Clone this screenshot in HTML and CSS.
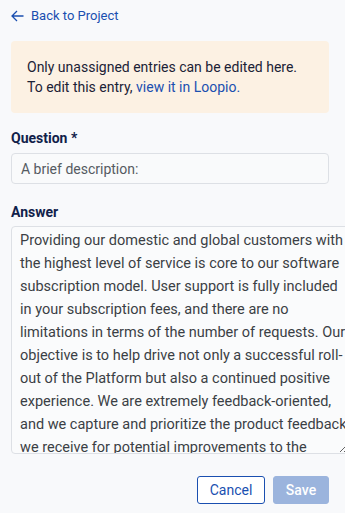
FILE: index.html
```html
<!DOCTYPE html>
<html>
<head>
<meta charset="utf-8">
<link rel="stylesheet" href="styles.css">
</head>
<body>
<div class="page">
  <a class="back" href="#">
    <svg class="arrow" width="13" height="12" viewBox="0 0 13 12"><path d="M6 1 L1 6 L6 11 M1 6 H12.5" fill="none" stroke="#1a4fb0" stroke-width="1.3"/></svg>
    <span>Back to Project</span>
  </a>
  <div class="notice">
    Only unassigned entries can be edited here.<br>
    To edit this entry, <a href="#" class="link">view it in Loopio.</a>
  </div>
  <div class="field first">
    <label class="label">Question *</label>
    <div class="input">A brief description:</div>
  </div>
  <div class="field second">
    <label class="label">Answer</label>
    <textarea class="textarea">Providing our domestic and global customers with the highest level of service is core to our software subscription model. User support is fully included in your subscription fees, and there are no limitations in terms of the number of requests. Our objective is to help drive not only a successful roll-out of the Platform but also a continued positive experience. We are extremely feedback-oriented, and we capture and prioritize the product feedback we receive for potential improvements to the Platform.</textarea>
  </div>
  <div class="actions">
    <button class="btn cancel">Cancel</button>
    <button class="btn save">Save</button>
  </div>
</div>
</body>
</html>
```
FILE: styles.css
```css
html, body {
  margin: 0;
  padding: 0;
  background: #f8f9fb;
  overflow: hidden;
}
.page {
  font-family: Roboto, "Liberation Sans", sans-serif;
  padding: 7px 16px 0 11px;
  width: 318px;
}
.back {
  display: flex;
  align-items: center;
  gap: 7px;
  color: #1a4fb0;
  text-decoration: none;
  font-size: 13px;
  height: 17px;
}
.notice {
  margin-top: 17px;
  background: #fcf1e3;
  border-radius: 4px;
  padding: 16px 15px 16px 16px;
  font-size: 14px;
  line-height: 20px;
  color: #1b2236;
}
.link {
  color: #1a4fb0;
  text-decoration: none;
}
.field.first {
  margin-top: 16px;
}
.field.second {
  margin-top: 19px;
}
.label {
  display: block;
  font-weight: 700;
  font-size: 14px;
  color: #10214a;
  line-height: 18px;
  margin-bottom: 5px;
}
.first .label {
  margin-bottom: 6px;
}
.input {
  box-sizing: border-box;
  height: 31px;
  border: 1px solid #dde0e5;
  border-radius: 4px;
  padding: 0 9px;
  display: flex;
  align-items: center;
  font-size: 14px;
  color: #555a62;
  background: #f9fafb;
}
.textarea {
  display: block;
  box-sizing: border-box;
  width: 338px;
  height: 228px;
  border: 1px solid #dde0e5;
  border-radius: 4px;
  padding: 2px 0 4px 8px;
  font-family: Roboto, "Liberation Sans", sans-serif;
  font-size: 14.5px;
  line-height: 23px;
  color: #3b3f45;
  background: #fafbfc;
  overflow: hidden;
  outline: none;
  margin: 0;
}
.actions {
  margin-top: 22px;
  display: flex;
  justify-content: flex-end;
  gap: 8px;
}
.btn {
  font-family: Roboto, "Liberation Sans", sans-serif;
  font-size: 14px;
  height: 28px;
  border-radius: 3px;
  padding: 0;
  cursor: pointer;
}
.cancel {
  width: 68px;
  background: #fff;
  border: 1px solid #1a4fb0;
  color: #1a4fb0;
}
.save {
  width: 56px;
  background: #9bb4dd;
  border: 1px solid #9bb4dd;
  color: #fff;
  font-weight: 500;
}
```
